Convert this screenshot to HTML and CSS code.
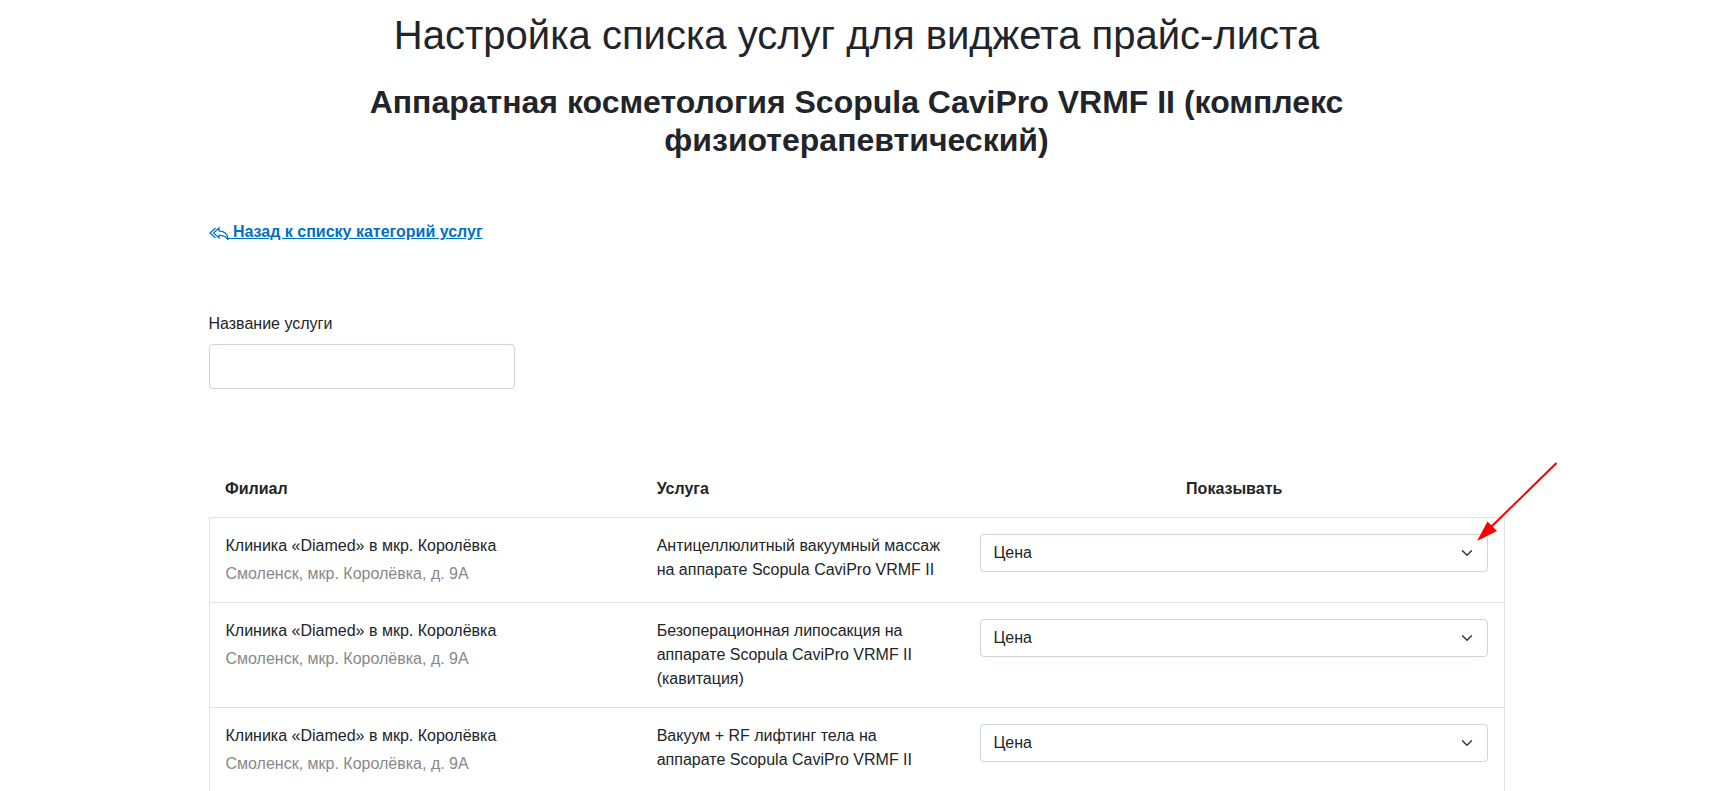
FILE: index.html
```html
<!DOCTYPE html>
<html lang="ru">
<head>
  <meta charset="utf-8">
  <meta name="viewport" content="width=device-width, initial-scale=1">
  <title>Настройка списка услуг для виджета прайс-листа</title>
  <link rel="stylesheet" href="styles.css">
</head>
<body>
  <main class="container">
    <h1 class="title">Настройка списка услуг для виджета прайс-листа</h1>
    <h2 class="subtitle">Аппаратная косметология Scopula CaviPro VRMF II (комплекс физиотерапевтический)</h2>

    <nav class="back">
      <a class="back-link" href="#"><svg class="back-icon" viewBox="0 0 20 14" aria-hidden="true"><path d="M6.500 1 L1 6 L6.500 11 M10 1 L4.500 6 L10 11 V8.400 C14 8.200 17 9.600 19.300 13 C18.800 7.500 15.500 4 10 3.800 Z"/></svg> Назад к списку категорий услуг</a>
    </nav>

    <form class="filter">
      <label class="filter-label" for="service-name">Название услуги</label>
      <input class="filter-input" type="text" id="service-name">
    </form>

    <div class="table-wrap">
      <table class="services">
        <colgroup>
          <col class="col-branch">
          <col class="col-service">
          <col class="col-show">
        </colgroup>
        <thead>
          <tr>
            <th scope="col">Филиал</th>
            <th scope="col">Услуга</th>
            <th scope="col" class="centered">Показывать</th>
          </tr>
        </thead>
        <tbody>
          <tr>
            <td>Клиника «Diamed» в мкр. Королёвка<div class="address">Смоленск, мкр. Королёвка, д. 9А</div></td>
            <td>Антицеллюлитный вакуумный массаж на аппарате Scopula CaviPro VRMF II</td>
            <td class="show-cell">
              <select class="select" aria-label="Показывать: антицеллюлитный вакуумный массаж"><option>Цена</option></select>
              <svg class="pointer" viewBox="0 0 80 80" aria-hidden="true"><path class="pointer-line" d="M79.500 1 L14 65"/><path class="pointer-head" d="M0 79 L10.500 59.500 L20 69 Z"/></svg>
            </td>
          </tr>
          <tr>
            <td>Клиника «Diamed» в мкр. Королёвка<div class="address">Смоленск, мкр. Королёвка, д. 9А</div></td>
            <td>Безоперационная липосакция на аппарате Scopula CaviPro VRMF II (кавитация)</td>
            <td><select class="select" aria-label="Показывать: безоперационная липосакция"><option>Цена</option></select></td>
          </tr>
          <tr>
            <td>Клиника «Diamed» в мкр. Королёвка<div class="address">Смоленск, мкр. Королёвка, д. 9А</div></td>
            <td>Вакуум + RF лифтинг тела на аппарате Scopula CaviPro VRMF II</td>
            <td><select class="select" aria-label="Показывать: вакуум + RF лифтинг тела"><option>Цена</option></select></td>
          </tr>
        </tbody>
      </table>
    </div>
  </main>
</body>
</html>
```

FILE: styles.css
```css
*,
*::before,
*::after {
  box-sizing: border-box;
}

body {
  margin: 0;
  padding-right: 21px;
  background: #fff;
  color: #212529;
  font-family: "Liberation Sans", Arial, sans-serif;
  font-size: 16px;
  line-height: 24px;
  overflow: hidden;
}

.container {
  max-width: 1320px;
  margin: 0 auto;
  padding: 11px 12px 0;
}

.title,
.subtitle {
  margin: 0;
  padding: 0 108px;
  text-align: center;
}

.title {
  margin-bottom: 24px;
  font-size: 40px;
  font-weight: 400;
  line-height: 48px;
}

.subtitle {
  margin-bottom: 61px;
  font-size: 32px;
  font-weight: 700;
  line-height: 38px;
}

.back {
  margin-bottom: 68px;
}

.back-link {
  color: #0070c0;
  font-weight: 700;
  text-decoration: underline;
}

.back-icon {
  width: 20px;
  height: 14px;
  vertical-align: -4px;
  fill: none;
  stroke: currentColor;
  stroke-width: 1.2;
}

.filter {
  width: 306px;
  max-width: 100%;
  margin-bottom: 72px;
}

.filter-label {
  display: block;
  margin-bottom: 8px;
}

.filter-input {
  display: block;
  width: 100%;
  height: 45px;
  padding: 6px 12px;
  border: 1px solid #ced4da;
  border-radius: 4px;
  background: #fff;
  color: inherit;
  font: inherit;
}

.services {
  width: 100%;
  table-layout: fixed;
  border-collapse: collapse;
}

.col-branch {
  width: 33.3333%;
}

.col-service {
  width: 25%;
}

.services th,
.services td {
  padding: 16px;
  text-align: left;
  vertical-align: top;
}

.services .centered {
  text-align: center;
}

.services tbody tr {
  border: 1px solid #dee2e6;
}

.address {
  margin-top: 4px;
  color: #888;
}

.select {
  display: block;
  width: 100%;
  height: 38px;
  padding: 6px 36px 6px 12px;
  border: 1px solid #ced4da;
  border-radius: 4px;
  appearance: none;
  background: #fff url("data:image/svg+xml,%3Csvg xmlns='http://www.w3.org/2000/svg' viewBox='0 0 16 16'%3E%3Cpath fill='none' stroke='%23343a40' stroke-linecap='round' stroke-linejoin='round' stroke-width='2' d='M2 5l6 6 6-6'/%3E%3C/svg%3E") no-repeat right 12px center / 16px 12px;
  color: inherit;
  font: inherit;
}

.show-cell {
  position: relative;
}

.pointer {
  position: absolute;
  top: -56px;
  right: -53px;
  width: 80px;
  height: 80px;
  pointer-events: none;
}

.pointer-line {
  fill: none;
  stroke: #f00;
  stroke-width: 2;
}

.pointer-head {
  fill: #f00;
}
```
